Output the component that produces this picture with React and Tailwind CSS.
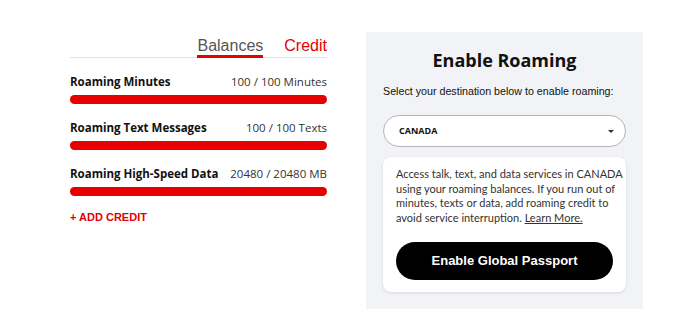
const rows = [
  { label: 'Roaming Minutes', value: '100 / 100 Minutes', pct: 100 },
  { label: 'Roaming Text Messages', value: '100 / 100 Texts', pct: 100 },
  { label: 'Roaming High-Speed Data', value: '20480 / 20480 MB', pct: 100 },
];

const mont = { fontFamily: '"Open Sans", sans-serif' };
const lato = { fontFamily: 'Lato, sans-serif' };

export default function App() {
  return (
    <div className="flex w-[688px] h-[331px] bg-white pl-[70px] pt-[32px] gap-[39px] text-[#111]">
      {/* balances column */}
      <div className="w-[257px] flex flex-col">
        <div className="flex justify-end gap-[21px] border-b border-[#e2e2e2] font-['Liberation_Sans',sans-serif] text-[16px] leading-[18px] pt-[5px]">
          <div className="text-[#555] border-b-[3px] border-[#e60000] -mb-px">Balances</div>
          <div className="text-[#e60000]">Credit</div>
        </div>

        <div className="mt-[17px] flex flex-col gap-[17px]" style={mont}>
          {rows.map(r => (
            <div key={r.label}>
              <div className="flex justify-between items-center text-[11.5px] leading-[14px]">
                <span className="font-bold">{r.label}</span>
                <span className="text-[#333]">{r.value}</span>
              </div>
              <div className="mt-[6px] h-[9px] rounded-full bg-[#eee]">
                <div className="h-full rounded-full bg-[#e60000]" style={{ width: r.pct + '%' }} />
              </div>
            </div>
          ))}
        </div>

        <div className="mt-[13px] text-[#e60000] font-bold text-[11px] font-['Liberation_Sans',sans-serif]">+ ADD CREDIT</div>
      </div>

      {/* roaming panel */}
      <div className="w-[277px] h-[277px] bg-[#f2f3f7] flex flex-col px-[17px]">
        <h2 className="mt-[18px] text-center font-bold text-[18px] leading-[20px]" style={mont}>Enable Roaming</h2>
        <p className="mt-[14px] text-[10.7px] leading-[14px] whitespace-nowrap text-[#111] font-['Liberation_Sans',sans-serif]">Select your destination below to enable roaming:</p>
        <div className="shrink-0 mt-[17px] h-[32px] rounded-full border border-[#b5b5b5] bg-white flex items-center justify-between pl-[15px] pr-[10px]">
          <span className="text-[9px] font-bold" style={mont}>CANADA</span>
          <svg width="8" height="5" viewBox="0 0 8 5"><path d="M1 1l3 3 3-3z" fill="#333" /></svg>
        </div>
        <div className="shrink-0 mt-[10px] bg-white rounded-[8px] shadow-[0_1px_3px_rgba(0,0,0,0.12)] px-[13px] pt-[10px] pb-[12px]">
          <p className="text-[11px] leading-[14.5px] text-[#333] whitespace-nowrap" style={lato}>
            Access talk, text, and data services in CANADA<br />
            using your roaming balances. If you run out of<br />
            minutes, texts or data, add roaming credit to<br />
            avoid service interruption. <span className="underline">Learn More.</span>
          </p>
          <button className="mt-[17px] w-full h-[38px] rounded-full bg-black text-white font-bold text-[13px] font-['Liberation_Sans',sans-serif]">Enable Global Passport</button>
        </div>
      </div>
    </div>
  );
}
